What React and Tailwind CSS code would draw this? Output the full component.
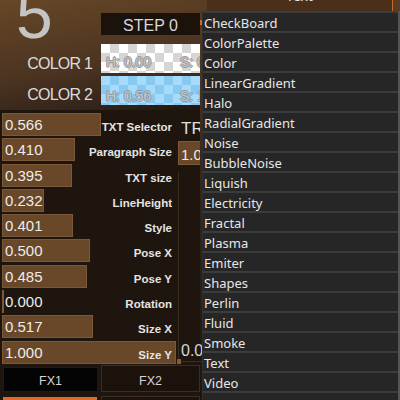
import React from "react";

const sliders = [
  { v: 0.566, label: "TXT Selector" },
  { v: 0.41, label: "Paragraph Size" },
  { v: 0.395, label: "TXT size" },
  { v: 0.232, label: "LineHeight" },
  { v: 0.401, label: "Style" },
  { v: 0.5, label: "Pose X" },
  { v: 0.485, label: "Pose Y" },
  { v: 0.0, label: "Rotation" },
  { v: 0.517, label: "Size X" },
  { v: 1.0, label: "Size Y" },
];

const items = [
  "CheckBoard",
  "ColorPalette",
  "Color",
  "LinearGradient",
  "Halo",
  "RadialGradient",
  "Noise",
  "BubbleNoise",
  "Liquish",
  "Electricity",
  "Fractal",
  "Plasma",
  "Emiter",
  "Shapes",
  "Perlin",
  "Fluid",
  "Smoke",
  "Text",
  "Video",
  "",
];

export default function App() {
  return (
    <div className="relative flex h-[400px] w-[400px] overflow-hidden bg-[#1e150e] font-['Liberation_Sans',Arial,sans-serif]">
      {/* Left panel */}
      <div className="flex w-[200px] shrink-0 flex-col">
        {/* Header */}
        <div className="flex h-[110px] bg-[linear-gradient(170deg,#664727_0%,#4c3421_55%,#33241a_85%,#1e150e_100%)]">
          <div className="flex w-[101px] shrink-0 flex-col">
            <div className="h-[50px] pl-[16px] text-[66px] leading-[30px] text-[#c4c4c4]">5</div>
            <div className="h-[31px] pr-[9px] text-right text-[16px] leading-[31px] tracking-[-0.8px] text-[#dcdcdc]">
              COLOR 1
            </div>
            <div className="h-[31px] pr-[9px] text-right text-[16px] leading-[31px] tracking-[-0.8px] text-[#dcdcdc]">
              COLOR 2
            </div>
          </div>
          <div className="flex w-[99px] shrink-0 flex-col">
            <div className="-ml-[34px] -mt-[3px] h-[16px] whitespace-nowrap text-[16px] font-bold leading-[0px] text-white">
              <div className="-mt-[3px]">SOURCE TYPE</div>
            </div>
            <div className="h-[22px] bg-[#1b120b] text-center text-[16px] leading-[25px] text-[#d8d8d8]">
              STEP 0
            </div>
            <div className="mt-[9px] flex h-[29px] bg-[image:repeating-conic-gradient(#d6d6d6_0_25%,#ffffff_0_50%)] bg-[length:18px_18px] pl-[5px] text-[14px] leading-[36px] text-[#c2c2c2] [text-shadow:1px_0_0_#9a9a9a,-1px_0_0_#9a9a9a,0_1px_0_#9a9a9a,0_-1px_0_#9a9a9a]">
              <span className="w-[74px] shrink-0">H: 0.00</span>
              <span className="whitespace-nowrap">S: 0</span>
            </div>
            <div className="mt-[3px] flex h-[29px] bg-[image:repeating-conic-gradient(#88c9f1_0_25%,#a6dbfb_0_50%)] bg-[length:18px_18px] pl-[5px] text-[14px] leading-[40px] text-[#c6c6c6] [text-shadow:1px_0_0_#8a9aa5,-1px_0_0_#8a9aa5,0_1px_0_#8a9aa5,0_-1px_0_#8a9aa5]">
              <span className="w-[74px] shrink-0">H: 0.56</span>
              <span className="whitespace-nowrap">S: 1</span>
            </div>
          </div>
        </div>

        {/* Sliders + side column */}
        <div className="flex pt-[3px]">
          <div className="ml-[2px] flex w-[174px] shrink-0 flex-col gap-[2.3px]">
            {sliders.map((s) => (
              <div key={s.label} className="grid h-[23px] grid-cols-1 grid-rows-[23px]">
                <div
                  className="col-start-1 row-start-1 h-[23px] border border-[#7a5838] bg-[#684828]"
                  style={{ width: `${2 + s.v * 172}px` }}
                />
                <div className="col-start-1 row-start-1 h-[23px] pl-[3px] text-[15px] leading-[23px] text-[#ececec]">
                  {s.v.toFixed(3)}
                </div>
                <div className="col-start-1 row-start-1 h-[23px] pr-[4px] text-right text-[11.5px] font-bold leading-[29px] text-[#e4e4e4]">
                  {s.label}
                </div>
              </div>
            ))}
          </div>
          <div className="ml-[2px] flex w-[24px] shrink-0 flex-col">
            <div className="h-[23px] whitespace-nowrap pl-[3px] text-[17px] leading-[32px] text-[#e0e0e0]">TRA</div>
            <div className="mt-[5px] h-[24px] whitespace-nowrap border border-[#7a5838] bg-[#684828] pl-[2px] text-[15px] leading-[26px] text-[#ececec]">
              1.00
            </div>
            <div className="relative mt-[7px] flex h-[190px] flex-col justify-end border-b border-l border-[#3d2d1f] pb-[2px]">
              <div className="h-[16px] whitespace-nowrap pl-[2px] text-[16px] leading-[16px] text-[#d6d6d6]">0.0</div>
              <div className="absolute -bottom-[3px] -left-[2px] h-[5px] w-[4px] bg-[#8b5a2b]" />
            </div>
          </div>
        </div>

        {/* FX buttons */}
        <div className="flex items-start">
          <div className="ml-[3px] mt-[3px] h-[25px] w-[95px] shrink-0 border border-[#1d1a17] bg-[#040404] text-center text-[12.5px] leading-[27px] text-[#d5d5d5]">
            FX1
          </div>
          <div className="ml-[3px] mt-[1px] h-[27px] w-[99px] shrink-0 border border-[#3b2d22] bg-[#1b120b] text-center text-[12.5px] leading-[31px] text-[#d5d5d5]">
            FX2
          </div>
        </div>
        <div className="flex items-start">
          <div className="ml-[3px] mt-[5px] h-[4px] w-[94px] shrink-0 bg-[#e2692a]" />
          <div className="ml-[4px] mt-[4px] h-[6px] w-[99px] shrink-0 border border-[#3b2d22] bg-[#1b120b]" />
        </div>
      </div>

      {/* Right panel (behind dropdown) */}
      <div className="flex flex-1 flex-col bg-[linear-gradient(180deg,#5a3d22_0%,#3a2818_40%,#1e150e_100%)]">
        <div className="ml-[7px] mr-[7px] h-[11px] overflow-hidden border-r border-[#c86a2c] bg-[#4a301b] text-center font-['Noto_Sans',sans-serif] text-[14px] leading-[0px] text-[#e6e6e6]">
          <div className="-mt-[4px] h-[4px]">Text</div>
        </div>
        <div className="mt-[9px] h-[5px] w-[2px] bg-[#d26a22]" />
      </div>

      {/* Dropdown list overlay */}
      <div className="absolute bottom-0 left-[202px] right-0 top-[11px] overflow-hidden border-l border-r-2 border-l-[#303030] border-r-[#555555] font-['Noto_Sans',sans-serif]">
        {items.map((it, i) => (
          <div
            key={i}
            className="h-[20px] border-t-2 border-[#3c3c3c] bg-[#262626] pl-[1px] text-[13px] leading-[21px] text-[#e6e6e6]"
          >
            {it}
          </div>
        ))}
      </div>
    </div>
  );
}
